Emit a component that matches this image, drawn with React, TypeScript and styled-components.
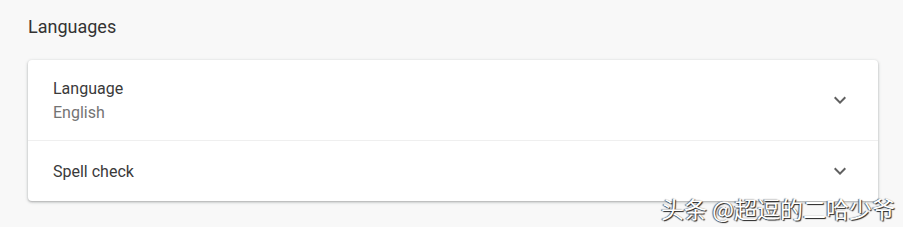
import React, { ReactElement } from "react";
import styled, { createGlobalStyle } from "styled-components";

/*
==========================
    Styled Components
==========================
*/
const GlobalStyle = createGlobalStyle`
  html, body {
    margin: 0;
    padding: 0;
    background: #f8f8f8;
    font-family: Roboto, "Noto Sans", Arial, sans-serif;
  }
`;

const Page = styled.div`
  /* Size */
  position: relative;
  width: 903px;
  height: 227px;
  padding: 15px 25px 0 28px;
  box-sizing: border-box;
  overflow: hidden;
`;

const SectionTitle = styled.h2`
  /* Text */
  margin: 0 0 21px;
  font-size: 18px;
  font-weight: 400;
  line-height: 24px;
  color: #333;
`;

const Card = styled.div`
  background: #fff;
  border-radius: 4px;
  box-shadow: 0 1px 2px rgba(60, 64, 67, 0.3), 0 1px 3px 1px rgba(60, 64, 67, 0.12);
`;

const Row = styled.div<{ $height: number; $divider?: boolean }>`
  /* Layout */
  display: flex;
  align-items: center;
  height: ${(p) => p.$height}px;
  padding: 0 26px 0 25px;
  border-top: ${(p) => (p.$divider ? "1px solid #efefef" : "none")};
`;

const RowText = styled.div`
  flex: 1;
  display: flex;
  flex-direction: column;
  gap: 3px;
`;

const Label = styled.div`
  font-size: 16px;
  line-height: 21px;
  color: #3a3a3a;
`;

const SubLabel = styled.div`
  font-size: 16px;
  line-height: 21px;
  color: #737373;
`;

const Chevron = styled.svg`
  width: 24px;
  height: 24px;
  fill: #606060;
`;

const Watermark = styled.div`
  position: absolute;
  right: 8px;
  bottom: 6px;
  font-family: "Noto Sans CJK SC", sans-serif;
  font-size: 23px;
  line-height: 26px;
  color: #fff;
  text-shadow: 1px 1px 1px #222, -1px 0 1px #555;
`;

/*
==========================
    React Element
==========================
*/
const ExpandIcon = (): ReactElement => (
  <Chevron viewBox="0 0 24 24">
    <path d="M16.59 8.59 12 13.17 7.41 8.59 6 10l6 6 6-6z" />
  </Chevron>
);

const App = (): ReactElement => {
  return (
    <>
      <GlobalStyle />
      <Page>
        <SectionTitle>Languages</SectionTitle>
        <Card>
          <Row $height={80}>
            <RowText>
              <Label>Language</Label>
              <SubLabel>English</SubLabel>
            </RowText>
            <ExpandIcon />
          </Row>
          <Row $height={60} $divider>
            <RowText>
              <Label>Spell check</Label>
            </RowText>
            <ExpandIcon />
          </Row>
        </Card>
        <Watermark>头条 @超逗的二哈少爷</Watermark>
      </Page>
    </>
  );
};

export default App;
